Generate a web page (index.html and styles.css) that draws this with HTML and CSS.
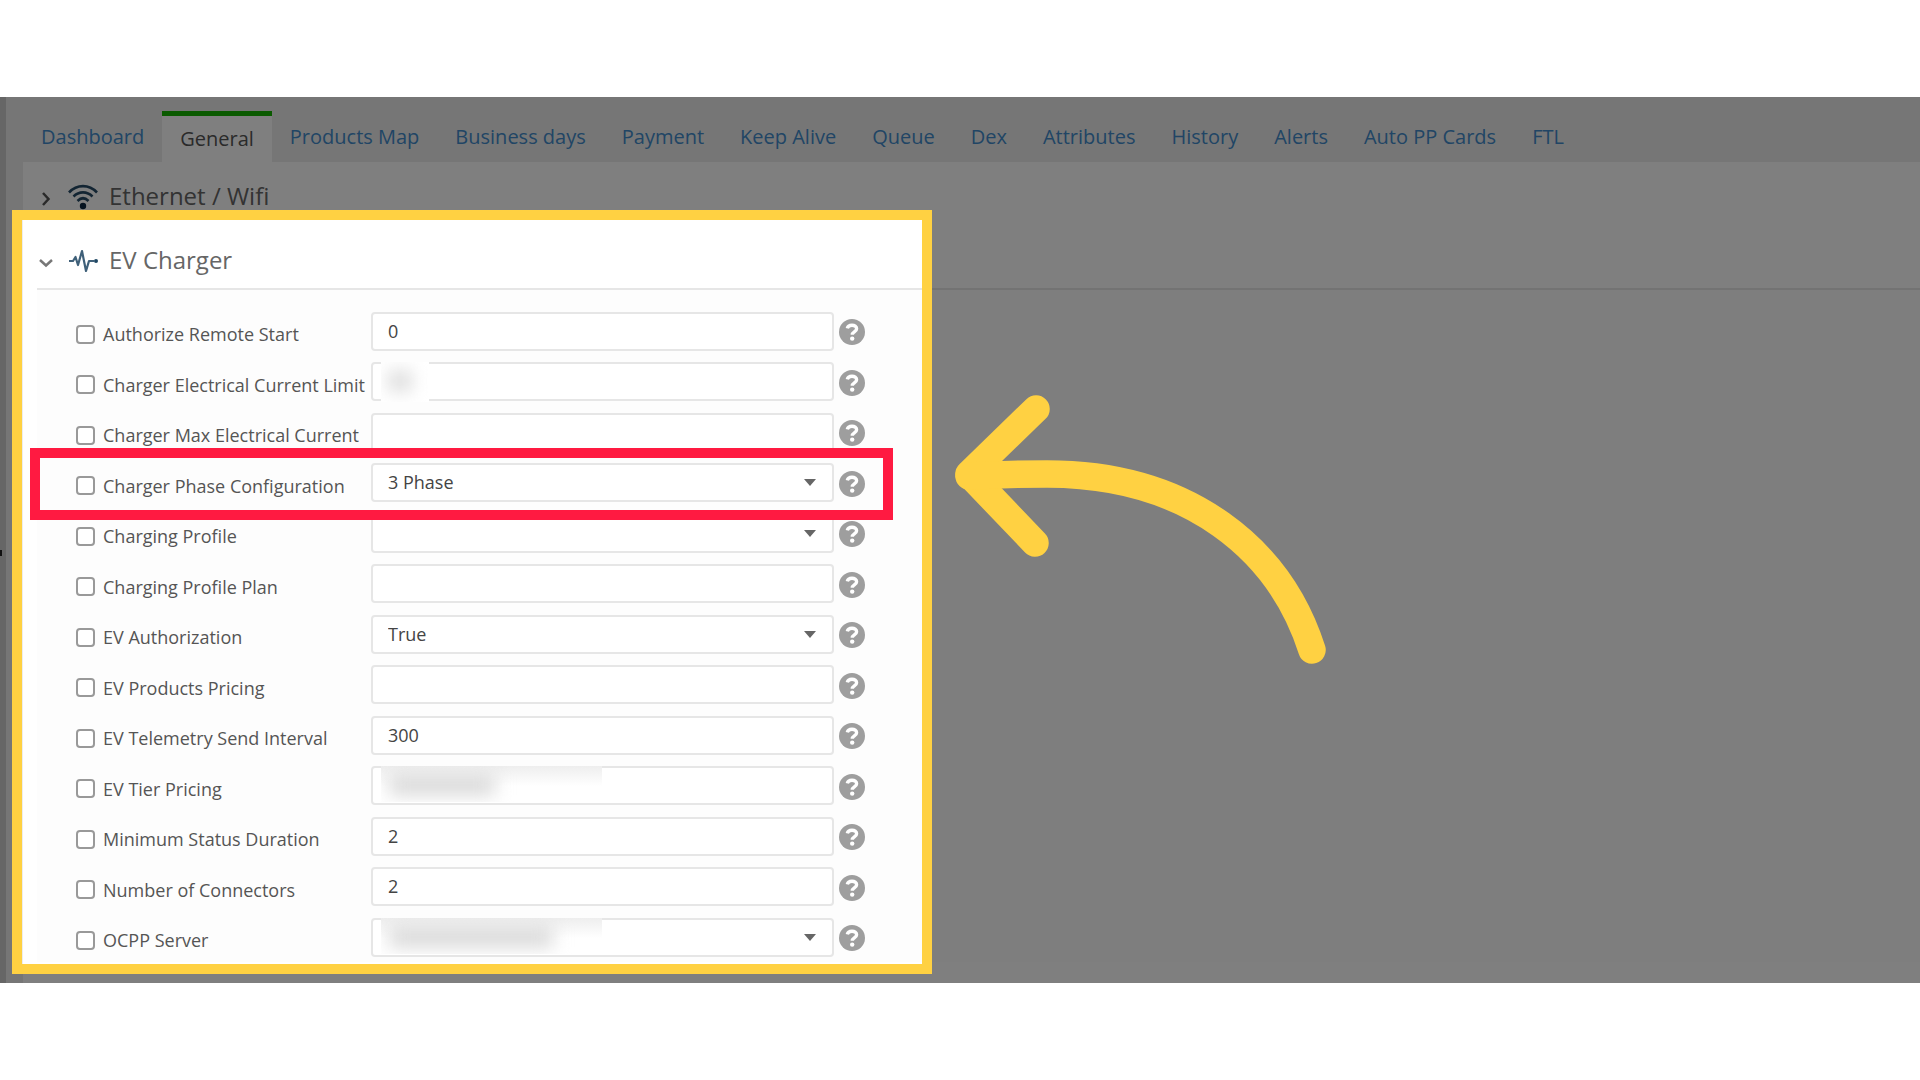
FILE: index.html
```html
<!DOCTYPE html>
<html lang="en">
<head>
<meta charset="utf-8">
<title>Device settings - EV Charger</title>
<link rel="stylesheet" href="styles.css">
</head>
<body>
<svg class="sprite" aria-hidden="true">
  <symbol id="help" viewBox="0 0 26 26">
    <circle cx="13" cy="13" r="13" fill="#9e9e9e"/>
    <path d="M8.300 9.400C8.800 7 10.500 6.200 13 6.200c2.600 0 4.600 1.300 4.600 3.500 0 3.200-4.300 3.200-4.300 6" fill="none" stroke="#fff" stroke-width="3.400"/>
    <circle cx="13.200" cy="19.600" r="2.200" fill="#fff"/>
  </symbol>
</svg>
<div class="app">
  <aside class="rail"></aside>
  <div class="main">
    <nav class="tabs">
      <a href="#">Dashboard</a>
      <a href="#" class="active" aria-current="page">General</a>
      <a href="#">Products Map</a>
      <a href="#">Business days</a>
      <a href="#">Payment</a>
      <a href="#">Keep Alive</a>
      <a href="#">Queue</a>
      <a href="#">Dex</a>
      <a href="#">Attributes</a>
      <a href="#">History</a>
      <a href="#">Alerts</a>
      <a href="#">Auto PP Cards</a>
      <a href="#">FTL</a>
    </nav>
    <main class="content">
      <h2 class="section">
        <svg class="chevron" viewBox="0 0 14 14"><path d="M4 1l5.500 6L4 13" fill="none" stroke="#555" stroke-width="2.500"/></svg>
        <svg class="glyph" viewBox="0 0 30 26"><g fill="none" stroke="#274b66" stroke-width="2.600"><path d="M1 8.500C9 0 21 0 29 8.500"/><path d="M5.500 12.500C11 7 19 7 24.500 12.500"/><path d="M9.500 17c3.500-3.500 7.500-3.500 11 0"/></g><circle cx="15" cy="22" r="3.200" fill="#0b2740"/></svg>
        Ethernet / Wifi
      </h2>
      <h2 class="section open">
        <svg class="chevron" viewBox="0 0 14 14"><path d="M1 4l6 5.500L13 4" fill="none" stroke="#777" stroke-width="2.500"/></svg>
        <svg class="glyph" viewBox="0 0 30 26"><path d="M1 13h4l2.500-4 2.500 8L14 3l4 20 3-10h5" fill="none" stroke="#3f6079" stroke-width="2.200" stroke-linejoin="round"/><circle cx="28" cy="13" r="2" fill="#1f4764"/></svg>
        EV Charger
      </h2>
      <form class="settings">
        <div class="row"><label class="name"><input type="checkbox">Authorize Remote Start</label><span class="field"><input type="text" aria-label="Authorize Remote Start" value="0"></span><button type="button" class="help" aria-label="Help"><svg><use href="#help"/></svg></button></div>
        <div class="row"><label class="name"><input type="checkbox">Charger Electrical Current Limit</label><span class="field"><input type="text" aria-label="Charger Electrical Current Limit"><span class="mask small"></span></span><button type="button" class="help" aria-label="Help"><svg><use href="#help"/></svg></button></div>
        <div class="row"><label class="name"><input type="checkbox">Charger Max Electrical Current</label><span class="field"><input type="text" aria-label="Charger Max Electrical Current"></span><button type="button" class="help" aria-label="Help"><svg><use href="#help"/></svg></button></div>
        <div class="row marked"><label class="name"><input type="checkbox">Charger Phase Configuration</label><span class="field drop"><select aria-label="Charger Phase Configuration"><option>3 Phase</option></select></span><button type="button" class="help" aria-label="Help"><svg><use href="#help"/></svg></button></div>
        <div class="row"><label class="name"><input type="checkbox">Charging Profile</label><span class="field drop"><select aria-label="Charging Profile"><option></option></select></span><button type="button" class="help" aria-label="Help"><svg><use href="#help"/></svg></button></div>
        <div class="row"><label class="name"><input type="checkbox">Charging Profile Plan</label><span class="field"><input type="text" aria-label="Charging Profile Plan"></span><button type="button" class="help" aria-label="Help"><svg><use href="#help"/></svg></button></div>
        <div class="row"><label class="name"><input type="checkbox">EV Authorization</label><span class="field drop"><select aria-label="EV Authorization"><option>True</option></select></span><button type="button" class="help" aria-label="Help"><svg><use href="#help"/></svg></button></div>
        <div class="row"><label class="name"><input type="checkbox">EV Products Pricing</label><span class="field"><input type="text" aria-label="EV Products Pricing"></span><button type="button" class="help" aria-label="Help"><svg><use href="#help"/></svg></button></div>
        <div class="row"><label class="name"><input type="checkbox">EV Telemetry Send Interval</label><span class="field"><input type="text" aria-label="EV Telemetry Send Interval" value="300"></span><button type="button" class="help" aria-label="Help"><svg><use href="#help"/></svg></button></div>
        <div class="row"><label class="name"><input type="checkbox">EV Tier Pricing</label><span class="field"><input type="text" aria-label="EV Tier Pricing"><span class="mask medium"></span></span><button type="button" class="help" aria-label="Help"><svg><use href="#help"/></svg></button></div>
        <div class="row"><label class="name"><input type="checkbox">Minimum Status Duration</label><span class="field"><input type="text" aria-label="Minimum Status Duration" value="2"></span><button type="button" class="help" aria-label="Help"><svg><use href="#help"/></svg></button></div>
        <div class="row"><label class="name"><input type="checkbox">Number of Connectors</label><span class="field"><input type="text" aria-label="Number of Connectors" value="2"></span><button type="button" class="help" aria-label="Help"><svg><use href="#help"/></svg></button></div>
        <div class="row"><label class="name"><input type="checkbox">OCPP Server</label><span class="field drop"><select aria-label="OCPP Server"><option></option></select><span class="mask large"></span></span><button type="button" class="help" aria-label="Help"><svg><use href="#help"/></svg></button></div>
      </form>
    </main>
  </div>
  <div class="spotlight"></div>
  <svg class="arrow" viewBox="955 395 371 269" aria-hidden="true"><g fill="none" stroke="#ffd142" stroke-width="27.500" stroke-linecap="round" stroke-linejoin="round"><path d="M1036 409L969 474L1035 543"/><path d="M969 476Q1008 474 1047 474C1190 474 1280 550 1312 650"/></g></svg>
</div>
</body>
</html>
```
FILE: styles.css
```css
*, *::before, *::after { box-sizing: border-box; }

body {
  margin: 0;
  min-height: 100vh;
  display: flex;
  flex-direction: column;
  justify-content: center;
  background: #fff;
  color: #555;
  font: 18px/26px "Open Sans", "Noto Sans", sans-serif;
}

.sprite { display: none; }

.app {
  position: relative;
  display: flex;
  overflow: hidden;
  background: #ededed;
}

.rail {
  flex: none;
  width: 6px;
  background: #ccc;
  display: flex;
  align-items: center;
}
.rail::before {
  content: "";
  width: 2px;
  height: 6px;
  margin-top: 26px;
  background: #222;
}

.main { flex: 1; min-width: 0; padding-left: 17px; }

.tabs { display: flex; height: 65px; padding-top: 14px; }
.tabs a {
  padding: 13px 18px 0;
  color: #428bca;
  font-size: 20px;
  text-decoration: none;
  white-space: nowrap;
}
.tabs .active {
  padding-top: 10px;
  border-top: 5px solid #14b400;
  background: #fff;
  color: #555;
}

.content { background: #fff; padding: 0 0 21px 14px; }

.section {
  display: flex;
  align-items: center;
  height: 63px;
  margin: 0;
  padding: 4px 0 0 2px;
  font-size: 24px;
  font-weight: 400;
  color: #666;
}
.section.open { height: 65px; padding-top: 6px; border-bottom: 2px solid #e6e6e6; }
.chevron { width: 14px; height: 14px; margin: 6px 15px 0 0; }
.glyph { width: 30px; height: 26px; margin: 2px 11px 0 0; }

.settings { margin: 0; padding-top: 16px; background: #fdfdfd; }

.row {
  position: relative;
  display: grid;
  grid-template-columns: 295px 463px 26px;
  align-items: center;
  height: 50px;
  padding-left: 39px;
}
.row:nth-child(even) { height: 51px; }
.row .help { margin: 2px 0 0 5px; }

.name {
  display: flex;
  align-items: center;
  gap: 8px;
  padding-top: 6px;
  white-space: nowrap;
}
.name input {
  appearance: none;
  width: 19px;
  height: 19px;
  margin: 0;
  border: 2px solid #999;
  border-radius: 4px;
  background: #fff;
}

.field { position: relative; }
.field input,
.field select {
  appearance: none;
  display: block;
  width: 100%;
  height: 39px;
  margin: 0;
  padding: 0 15px 1px;
  border: 2px solid #e6e6e6;
  border-radius: 4px;
  background: #fff;
  color: #444;
  font: inherit;
}
.drop::after {
  content: "";
  position: absolute;
  right: 18px;
  top: 16px;
  border: 6px solid transparent;
  border-top: 7px solid #666;
  border-bottom: 0;
}

.mask {
  position: absolute;
  left: 10px;
  top: 0;
  height: 36px;
  overflow: hidden;
  background: #fff;
}
.mask::before {
  content: "";
  display: block;
  height: 20px;
  margin: 9px 0 0 8px;
  background: #d8d8d8;
  filter: blur(9px);
}
.small { width: 48px; height: 40px; }
.small::before { width: 22px; }
.medium, .large { width: 221px; background: linear-gradient(#eee, #fff 20px); }
.medium::before { width: 106px; }
.large::before { width: 164px; }

.help {
  width: 26px;
  height: 26px;
  padding: 0;
  border: 0;
  background: none;
}
.help svg { display: block; width: 26px; height: 26px; }

/* Callout round the row being explained */
.marked::after {
  content: "";
  position: absolute;
  left: -7px;
  top: -9px;
  width: 863px;
  height: 72px;
  border: 10px solid #ff1a41;
  z-index: 1;
}

/* Bright window over the dimmed page */
.spotlight {
  position: absolute;
  left: 12px;
  top: 113px;
  bottom: 9px;
  width: 920px;
  border: 10px solid #ffd142;
  box-shadow: 0 0 0 2000px rgba(0, 0, 0, .5);
  z-index: 2;
}

.arrow {
  position: absolute;
  left: 955px;
  top: 298px;
  width: 371px;
  height: 269px;
  z-index: 3;
}
```
